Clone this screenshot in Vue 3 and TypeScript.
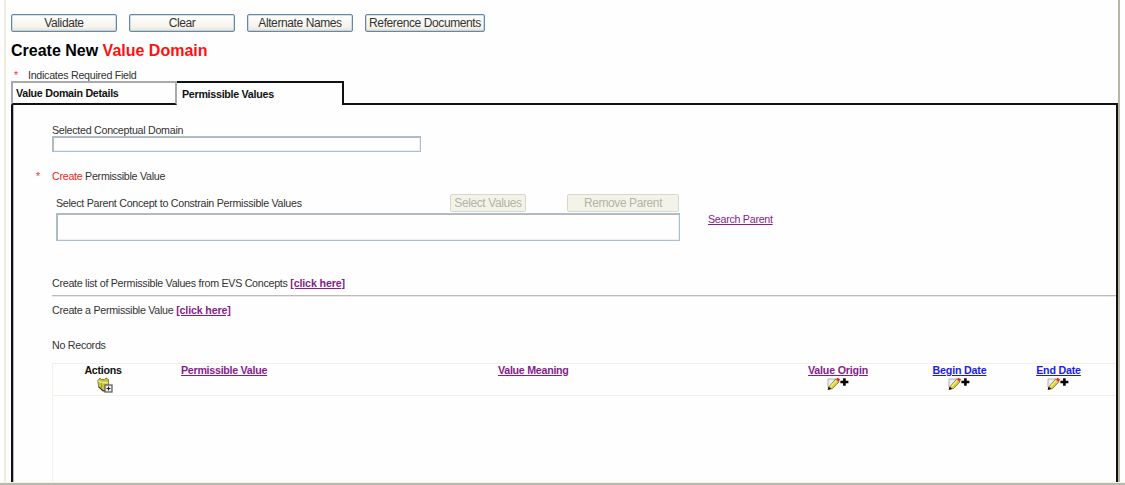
<script setup lang="ts">
interface Column {
  label: string
  kind: 'plain' | 'visited' | 'link'
  icon: 'folder' | 'edit' | null
  cls: string
}

const toolbar: { label: string; wide?: boolean }[] = [
  { label: 'Validate' },
  { label: 'Clear' },
  { label: 'Alternate Names' },
  { label: 'Reference Documents', wide: true },
]

const columns: Column[] = [
  { label: 'Actions', kind: 'plain', icon: 'folder', cls: 'actions' },
  { label: 'Permissible Value', kind: 'visited', icon: null, cls: 'value' },
  { label: 'Value Meaning', kind: 'visited', icon: null, cls: 'meaning' },
  { label: 'Value Origin', kind: 'visited', icon: 'edit', cls: 'origin' },
  { label: 'Begin Date', kind: 'link', icon: 'edit', cls: 'begin' },
  { label: 'End Date', kind: 'link', icon: 'edit', cls: 'end' },
]
</script>

<template>
  <div class="window">
    <main class="page">
      <div class="toolbar">
        <button v-for="b in toolbar" :key="b.label" class="btn" :class="{ wide: b.wide }">{{ b.label }}</button>
      </div>
      <h1>Create New <span class="red">Value Domain</span></h1>
      <p class="required"><span class="star">*</span><span>Indicates Required Field</span></p>
      <nav class="tabs">
        <div class="tab">Value Domain Details</div>
        <div class="tab active">Permissible Values</div>
        <div class="tab-rest"></div>
      </nav>
      <section class="panel">
        <label class="domain-label">Selected Conceptual Domain</label>
        <div class="field domain"></div>
        <p class="create"><span class="star">*</span><span><span class="red">Create</span> Permissible Value</span></p>
        <div class="parent">
          <div class="parent-main">
            <div class="parent-head">
              <span class="parent-label">Select Parent Concept to Constrain Permissible Values</span>
              <button class="btn off select" disabled>Select Values</button>
              <button class="btn off remove" disabled>Remove Parent</button>
            </div>
            <div class="field concept"></div>
          </div>
          <a class="visited search">Search Parent</a>
        </div>
        <p class="evs">Create list of Permissible Values from EVS Concepts <a class="visited bold">[click here]</a></p>
        <div class="rule"></div>
        <p class="single">Create a Permissible Value <a class="visited bold">[click here]</a></p>
        <p class="records">No Records</p>
        <div class="table">
          <div class="thead">
            <div v-for="c in columns" :key="c.label" class="th" :class="c.cls">
              <span :class="c.kind">{{ c.label }}</span>
              <svg v-if="c.icon === 'folder'" class="folder" width="16" height="16" viewBox="0 0 16 16">
                <path d="M.8 3.5 3 1 4.5 2.6H7.5L9 .9 11.4 2.5V11L10 13.5H6L1.6 9.6Z" fill="#c9c73f" stroke="#77742a" stroke-width=".9" />
                <path d="M1.4 4 4.6 5.6H10.8" fill="none" stroke="#f1ee92" stroke-width="1.1" />
                <path d="M4.6 5.8V11.4" stroke="#918e30" stroke-width=".8" />
                <path d="M1.6 9.9 6 13.9H8" fill="none" stroke="#3c3b1c" stroke-width="1.1" />
                <rect x="8" y="8" width="7" height="7" fill="#f2f2f2" stroke="#555" stroke-width="1.2" />
                <path d="M9.5 11.5H13.5M11.5 9.5V13.5" stroke="#222" stroke-width="1.1" />
              </svg>
              <svg v-else-if="c.icon === 'edit'" class="edit" width="22" height="14" viewBox="0 0 22 14">
                <path d="M1 10.5V2H9" fill="#eeeef4" stroke="#b0b0b0" stroke-width="1" />
                <path d="M2 9.8 8.6 2.2 12 4.8 5.4 11.6 1.5 12.5Z" fill="#ddd03c" stroke="#6a653c" stroke-width=".8" />
                <path d="M3.6 9.3 9.2 3.4" stroke="#fff68b" stroke-width="1.1" />
                <path d="M8.9 2.2 10.4.7 13 2.2 12 4.6Z" fill="#df2929" />
                <path d="M.6 13 1.6 9.8 4.3 11.7Z" fill="#111" />
                <path d="M13.4 5H21.4M17.4 1.2V8.8" stroke="#000" stroke-width="2.6" />
              </svg>
            </div>
          </div>
        </div>
      </section>
    </main>
  </div>
</template>

<style>
html, body { margin: 0; overflow: hidden; background: #fefefe; }
</style>

<style scoped>
* { box-sizing: border-box; }
.window {
  width: 1125px;
  height: 485px;
  padding: 0 0 3px 4px;
  background: linear-gradient(#f4f3ec 0 1px, #bbb8a9 1px 3px) 0 100% / 100% 3px no-repeat #fefefe;
  font: 10.7px/14px "Liberation Sans", Arial, sans-serif;
  letter-spacing: -.28px;
  color: #333;
  white-space: nowrap;
}
.page {
  width: 1116px;
  height: 482px;
  padding: 14px 0 0 5px;
  border-left: 2px solid #f0ecdf;
  border-right: 2px solid #b9b5a5;
}
p, h1 { margin: 0; }
.red { color: #fa1b1b; }
.star { color: #f33; }
.toolbar { display: flex; gap: 12px; height: 18px; }
.btn {
  width: 106px;
  height: 18px;
  padding: 0;
  border: 1px solid #6688a8;
  border-radius: 2px;
  background: linear-gradient(#fff, #f4f3ec 75%, #e5e3d8);
  box-shadow: inset 0 0 0 .5px #a9bfd4;
  font: 12px/16px "Liberation Sans", Arial, sans-serif;
  letter-spacing: -.4px;
  color: #333;
  text-align: center;
}
.btn.wide { width: 120px; }
.btn.off {
  border-color: #d8d8c9;
  background: #f4f3ea;
  box-shadow: none;
  color: #b5b4a6;
}
h1 {
  height: 20px;
  margin-top: 9px;
  font-size: 16px;
  line-height: 20px;
  letter-spacing: 0;
  color: #000;
}
h1 .red { color: #f11; }
.required { display: flex; height: 13px; margin-top: 7px; line-height: 14px; }
.required .star { width: 17px; padding-left: 3px; }
.tabs { display: flex; height: 24px; }
.tab {
  width: 166px;
  padding: 3px 0 0 3px;
  border: 2px solid #a9a9a9;
  border-bottom: 2px solid #111;
  font-weight: bold;
  line-height: 15px;
  color: #111;
}
.tab.active {
  width: 167px;
  padding: 4px 0 0 5px;
  border: solid #111;
  border-width: 2px 2px 0 0;
}
.tab-rest { flex: 1; border-bottom: 2px solid #111; }
.panel {
  height: 377px;
  padding: 18px 0 0 39px;
  border: solid #111;
  border-width: 0 2px 0 2px;
  box-shadow: inset 1px 0 0 #bbb;
}
.domain-label { display: block; height: 13px; }
.field {
  border: 1px solid #a9bfd3;
  background: #fefefe;
  box-shadow: inset 1px 1px 0 #b9b8ae, inset -1px -1px 0 #efeee8;
}
.domain { width: 369px; height: 16px; }
.create { display: flex; height: 14px; margin: 17px 0 0 -16px; }
.create .star { width: 16px; }
.parent { display: flex; margin: 11px 0 0 4px; }
.parent-main { width: 624px; }
.parent-head { display: flex; height: 19px; }
.parent-label { width: 394px; padding-top: 2px; }
.select { width: 76px; }
.remove { width: 112px; margin-left: 41px; }
.concept { height: 28px; }
.search { margin: 18px 0 0 28px; }
.visited { color: #851d8b; text-decoration: underline; }
.link { color: #1a1aec; text-decoration: underline; }
.plain { color: #111; }
.bold { font-weight: bold; letter-spacing: -.15px; }
.evs { height: 14px; margin-top: 35px; }
.rule { height: 2px; margin-top: 5px; border-top: 1px solid #bdbab5; border-bottom: 1px solid #ebe9e4; }
.single { height: 14px; margin-top: 6px; }
.records { height: 14px; margin-top: 21px; }
.table { height: 120px; margin-top: 11px; border: 1px solid #f3f0e7; border-width: 1px 0 0 1px; }
.thead {
  display: grid;
  grid-template-columns: 100px 345px 280px 120px 123px 75px 1fr;
  height: 32px;
  border-bottom: 1px solid #f3f0e7;
  font-weight: bold;
}
.th { display: flex; flex-direction: column; align-items: center; line-height: 13px; }
.th.value, .th.meaning { align-items: flex-start; }
.th.value { padding-left: 28px; }
.th.origin, .th.begin, .th.end { letter-spacing: -.2px; }
.folder { margin-left: 4px; }
.edit { margin: 0 0 0 -1px; }
</style>
